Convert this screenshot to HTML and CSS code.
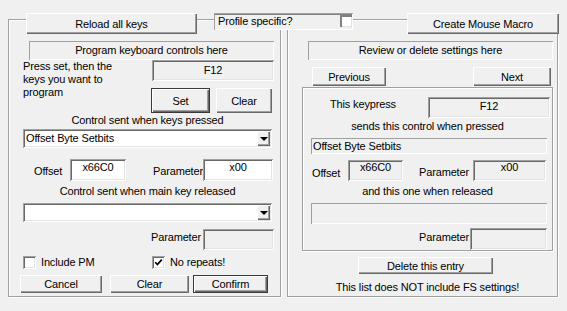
FILE: index.html
```html
<!DOCTYPE html>
<html lang="en">
<head>
    <meta charset="UTF-8">
    <title>Key Settings</title>
    <link rel="stylesheet" href="styles.css">
</head>
<body>
<div class="dialog">

    <!-- Buttons sitting on top of the two group boxes -->
    <div class="top-bar">
        <button class="btn reload-btn">Reload all keys</button>
        <div class="profile">
            <span class="profile-label">Profile specific?</span>
            <span class="profile-check"></span>
        </div>
        <button class="btn macro-btn">Create Mouse Macro</button>
    </div>

    <div class="panels">

        <!-- Left: program a key -->
        <div class="group group-left">
            <div class="static title-static">Program keyboard controls here</div>

            <div class="set-row">
                <p class="hint">Press set, then the<br>keys you want to<br>program</p>
                <div class="set-col">
                    <div class="edge key-box">F12</div>
                    <div class="set-buttons">
                        <button class="btn btn-default set-btn">Set</button>
                        <button class="btn clear-key-btn">Clear</button>
                    </div>
                </div>
            </div>

            <div class="caption caption-pressed">Control sent when keys pressed</div>
            <div class="edge combo combo-pressed">
                <span class="combo-text">Offset Byte Setbits</span>
                <span class="combo-arrow"></span>
            </div>

            <div class="offset-row">
                <span class="lbl offset-lbl">Offset</span>
                <div class="edge edit offset-edit">x66C0</div>
                <span class="lbl param-lbl">Parameter</span>
                <div class="edge edit param-edit">x00</div>
            </div>

            <div class="caption caption-released">Control sent when main key released</div>
            <div class="edge combo combo-released">
                <span class="combo-text"></span>
                <span class="combo-arrow"></span>
            </div>

            <div class="release-row">
                <span class="lbl release-lbl">Parameter</span>
                <div class="edge release-edit"></div>
            </div>

            <div class="check-row">
                <label class="check check-pm">
                    <span class="edge check-box"></span>
                    <span class="check-text">Include PM</span>
                </label>
                <label class="check">
                    <span class="edge check-box">
                        <svg width="9" height="9" viewBox="0 0 9 9">
                            <path d="M1.2 4.2 L3.4 6.6 L7.8 1.6" fill="none" stroke="#000" stroke-width="1.7"/>
                        </svg>
                    </span>
                    <span class="check-text">No repeats!</span>
                </label>
            </div>

            <div class="btn-row">
                <button class="btn cancel-btn">Cancel</button>
                <button class="btn clear-btn">Clear</button>
                <button class="btn btn-default confirm-btn">Confirm</button>
            </div>
        </div>

        <!-- Right: review existing entries -->
        <div class="group group-right">
            <div class="static title-static">Review or delete settings here</div>

            <div class="nav-row">
                <button class="btn prev-btn">Previous</button>
                <button class="btn next-btn">Next</button>
            </div>

            <div class="panel">
                <div class="kp-row">
                    <span class="lbl kp-lbl">This keypress</span>
                    <div class="edge kp-box">F12</div>
                </div>

                <div class="caption caption-sends">sends this control when pressed</div>
                <div class="static control-static">Offset Byte Setbits</div>

                <div class="ro-row">
                    <span class="lbl ro-offset-lbl">Offset</span>
                    <div class="edge ro-box ro-offset-box">x66C0</div>
                    <span class="lbl ro-param-lbl">Parameter</span>
                    <div class="edge ro-box ro-param-box">x00</div>
                </div>

                <div class="caption caption-and">and this one when released</div>
                <div class="static empty-static"></div>

                <div class="ro-release-row">
                    <span class="lbl ro-release-lbl">Parameter</span>
                    <div class="edge ro-release-box"></div>
                </div>
            </div>

            <button class="btn delete-btn">Delete this entry</button>
            <p class="footer-note">This list does NOT include FS settings!</p>
        </div>

    </div>
</div>
</body>
</html>
```

FILE: styles.css
```css
body {
    margin: 0;
    background: #f0f0f0;
    font-family: 'Liberation Sans', Arial, sans-serif;
    font-size: 11px;
    letter-spacing: -0.15px;
    color: #000;
}
p {
    margin: 0;
}
.dialog {
    width: 567px;
    height: 311px;
    padding-top: 13px;
    box-sizing: border-box;
}

/* Classic raised push button */
.btn {
    font: inherit;
    letter-spacing: inherit;
    color: #000;
    padding: 0;
    border: none;
    background: #f0f0f0;
    box-sizing: border-box;
    display: flex;
    align-items: center;
    justify-content: center;
    box-shadow: inset 1px 1px #fff, inset -1px -1px #696969, inset -2px -2px #a0a0a0;
}
.btn-default {
    border: 1px solid #3a3a3a;
    box-shadow: inset 1px 1px #fff, inset -1px -1px #696969, inset -2px -2px #a0a0a0;
}

/* Sunken borders */
.edge {
    box-sizing: border-box;
    box-shadow: inset 1px 1px #a0a0a0, inset -1px -1px #fff, inset 2px 2px #696969, inset -2px -2px #e3e3e3;
}
.static {
    box-sizing: border-box;
    box-shadow: inset 1px 1px #a0a0a0, inset -1px -1px #fff;
}
.lbl {
    line-height: 13px;
}

/* Top bar */
.top-bar {
    display: flex;
    align-items: flex-start;
    height: 21px;
    position: relative;
    z-index: 1;
}
.reload-btn {
    margin-left: 26px;
    width: 171px;
    height: 21px;
}
.profile {
    margin-left: 17px;
    width: 139px;
    height: 17px;
    display: flex;
    align-items: flex-start;
    background: #f0f0f0;
    box-sizing: border-box;
    box-shadow: inset 1px 1px #a0a0a0, inset -1px -1px #fff, inset 0 2px #808080;
}
.profile-label {
    padding-left: 4px;
    margin-top: 2px;
    line-height: 13px;
}
.profile-check {
    margin: 2px 1px 0 auto;
    width: 12px;
    height: 12px;
    background: #fff;
    box-sizing: border-box;
    box-shadow: inset 2px 2px #808080, inset -1px -1px #e3e3e3;
}
.macro-btn {
    margin-left: 54px;
    width: 152px;
    height: 21px;
}

/* Group boxes */
.panels {
    display: flex;
    margin-top: -15px;
}
.group {
    height: 278px;
    border: 1px solid #a0a0a0;
    box-sizing: border-box;
    box-shadow: inset 1px 1px #fff, 1px 1px #fff;
}
.group-left {
    margin-left: 8px;
    width: 273px;
}
.group-right {
    margin-left: 6px;
    width: 271px;
}
.title-static {
    margin: 21px 0 0 20px;
    width: 245px;
    height: 19px;
    line-height: 19px;
    text-align: center;
}

/* Left group */
.set-row {
    display: flex;
    height: 53px;
}
.hint {
    margin-left: 14px;
    width: 128px;
    line-height: 13px;
}
.key-box {
    margin-left: 1px;
    width: 122px;
    height: 21px;
    line-height: 21px;
    text-align: center;
}
.set-buttons {
    display: flex;
    gap: 6px;
    margin-top: 7px;
}
.set-btn {
    width: 59px;
    height: 25px;
}
.clear-key-btn {
    width: 56px;
    height: 25px;
}
.caption {
    line-height: 13px;
    text-align: center;
}
.group-left .caption {
    margin-left: 14px;
    width: 249px;
}
.caption-pressed {
    margin-top: 1px;
}
.caption-released {
    margin-top: 4px;
}
.combo {
    display: flex;
    margin-left: 14px;
    width: 249px;
    height: 19px;
    background: #fff;
}
.combo-pressed {
    margin-top: 2px;
}
.combo-released {
    margin-top: 5px;
}
.combo-text {
    padding: 3px 0 0 3px;
    line-height: 13px;
}
.combo-arrow {
    margin: 2px 2px 2px auto;
    width: 13px;
    height: 15px;
    background: #f0f0f0;
    display: flex;
    align-items: center;
    justify-content: center;
    box-shadow: inset 1px 1px #fff, inset -1px -1px #696969, inset -2px -2px #a0a0a0;
}
.combo-arrow::after {
    content: "";
    border-left: 4px solid transparent;
    border-right: 4px solid transparent;
    border-top: 4px solid #000;
    margin-top: 1px;
}
.offset-row {
    display: flex;
    align-items: flex-start;
    margin-top: 11px;
    height: 22px;
}
.offset-row .lbl {
    margin-top: 6px;
}
.edit {
    height: 22px;
    padding-top: 2px;
    line-height: 13px;
    text-align: center;
    background: #fff;
}
.offset-lbl {
    margin-left: 25px;
    width: 36px;
}
.offset-edit {
    width: 56px;
}
.param-lbl {
    margin-left: 27px;
    width: 50px;
}
.param-edit {
    width: 70px;
}
.release-row {
    display: flex;
    align-items: flex-start;
    margin-top: 7px;
    height: 21px;
}
.release-lbl {
    margin: 2px 0 0 142px;
    width: 52px;
}
.release-edit {
    width: 71px;
    height: 21px;
}
.check-row {
    display: flex;
    margin-top: 6px;
    height: 13px;
}
.check {
    display: flex;
    align-items: center;
}
.check-pm {
    margin-left: 14px;
    width: 129px;
}
.check-box {
    width: 13px;
    height: 13px;
    background: #fff;
    display: flex;
    align-items: center;
    justify-content: center;
}
.check-text {
    margin-left: 5px;
    line-height: 13px;
}
.btn-row {
    display: flex;
    margin-top: 6px;
    height: 18px;
}
.btn-row .btn {
    height: 18px;
}
.cancel-btn {
    margin-left: 11px;
    width: 82px;
}
.clear-btn {
    margin-left: 8px;
    width: 79px;
}
.confirm-btn {
    margin-left: 4px;
    width: 75px;
}

/* Right group */
.nav-row {
    display: flex;
    justify-content: space-between;
    margin: 7px 0 0 24px;
    width: 239px;
    height: 19px;
}
.prev-btn {
    width: 74px;
    height: 19px;
}
.next-btn {
    width: 78px;
    height: 19px;
}
.panel {
    margin: 1px 0 0 14px;
    width: 251px;
    height: 164px;
    border: 1px solid #a0a0a0;
    box-sizing: border-box;
    box-shadow: inset 1px 1px #fff, 1px 1px #fff;
}
.kp-row {
    display: flex;
    align-items: flex-start;
    margin-top: 9px;
    height: 21px;
}
.kp-lbl {
    margin: 1px 0 0 27px;
    width: 98px;
}
.kp-box {
    width: 122px;
    height: 21px;
    padding-top: 3px;
    line-height: 13px;
    text-align: center;
}
.caption-sends {
    margin-top: 2px;
}
.control-static {
    margin: 5px 0 0 8px;
    width: 236px;
    height: 16px;
    padding: 2px 0 0 2px;
    line-height: 13px;
}
.ro-row {
    display: flex;
    align-items: flex-start;
    margin-top: 6px;
    height: 21px;
}
.ro-box {
    height: 21px;
    padding-top: 1px;
    line-height: 13px;
    text-align: center;
}
.ro-offset-lbl {
    margin: 7px 0 0 9px;
    width: 36px;
}
.ro-offset-box {
    width: 55px;
}
.ro-param-lbl {
    margin: 6px 0 0 16px;
    width: 54px;
}
.ro-param-box {
    width: 73px;
}
.caption-and {
    margin-top: 4px;
}
.empty-static {
    margin: 5px 0 0 8px;
    width: 236px;
    height: 21px;
}
.ro-release-row {
    display: flex;
    align-items: flex-start;
    margin-top: 4px;
    height: 22px;
}
.ro-release-lbl {
    margin: 3px 0 0 116px;
    width: 51px;
}
.ro-release-box {
    width: 77px;
    height: 22px;
}
.delete-btn {
    margin: 6px 0 0 70px;
    width: 135px;
    height: 17px;
}
.footer-note {
    margin: 7px 0 0 14px;
    width: 251px;
    line-height: 13px;
    text-align: center;
}
```
